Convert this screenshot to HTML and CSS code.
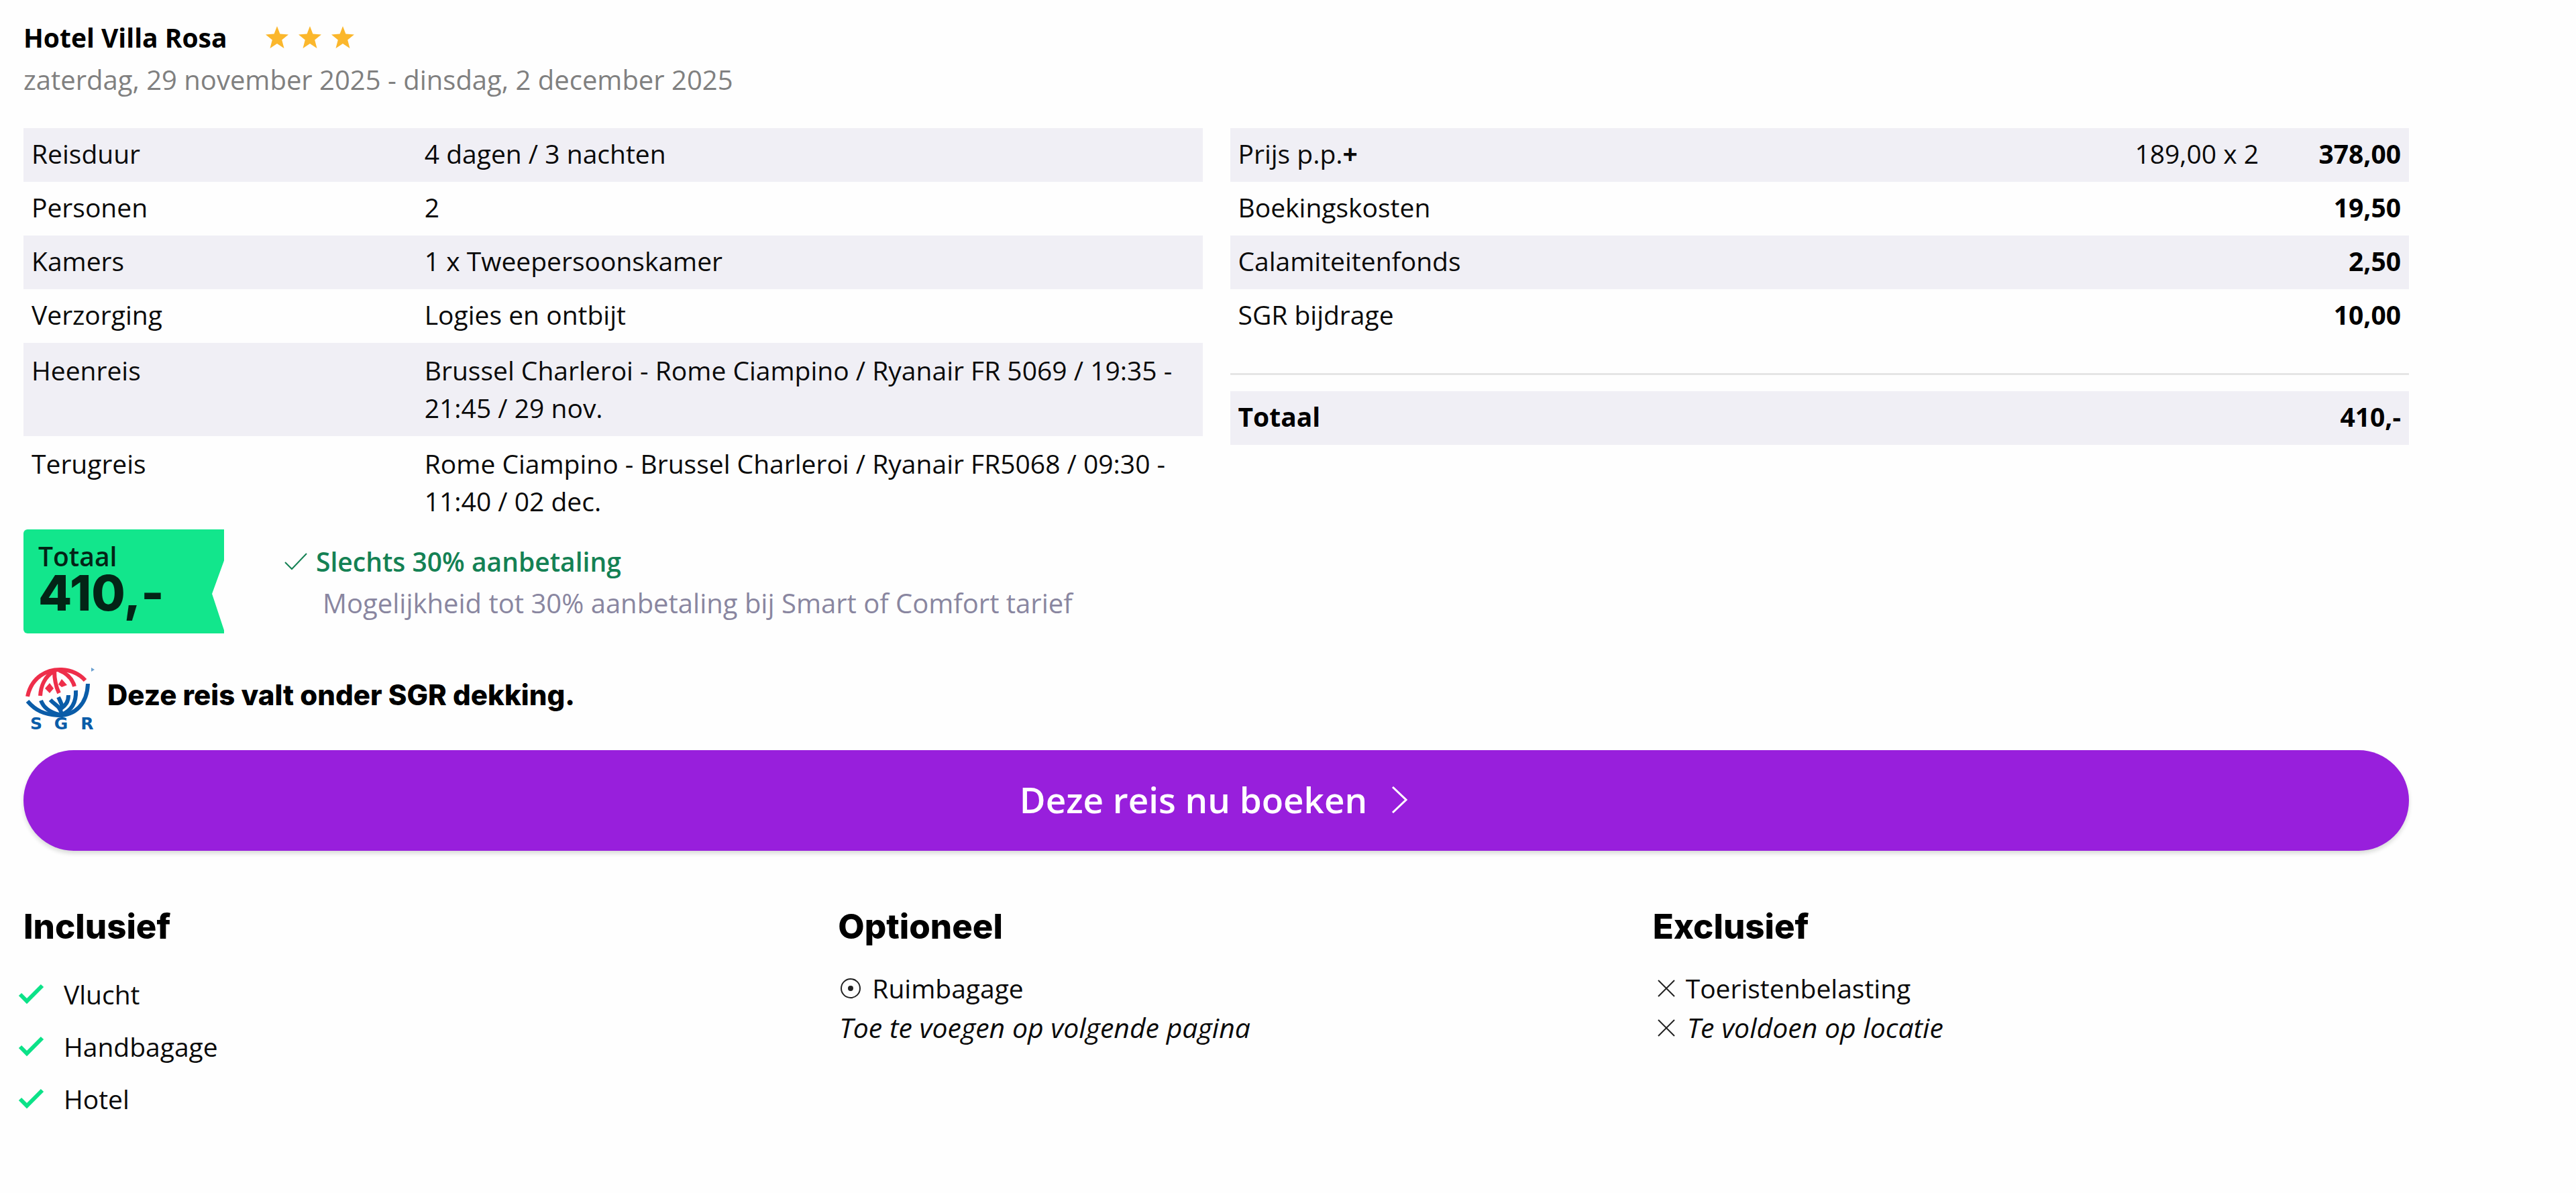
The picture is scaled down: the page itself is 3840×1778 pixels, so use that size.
FILE: index.html
```html
<!DOCTYPE html>
<html lang="nl">
<head>
<meta charset="utf-8">
<title>Hotel Villa Rosa</title>
<link rel="stylesheet" href="styles.css">
</head>
<body>
<svg class="sprite" aria-hidden="true">
  <symbol id="star" viewBox="0 0 34 34"><path d="M17 0 L21.4 11.6 L34 12.4 L24.2 20.4 L27.5 33 L17 26 L6.5 33 L9.8 20.4 L0 12.4 L12.6 11.6 Z" fill="#fbb72c"/></symbol>
  <symbol id="tick" viewBox="0 0 40 34"><path d="M3 17 L13 27 L36 4" fill="none" stroke="#0be288" stroke-width="6"/></symbol>
  <symbol id="cross" viewBox="0 0 26 26"><path d="M1 1 L25 25 M25 1 L1 25" fill="none" stroke="#222" stroke-width="2"/></symbol>
</svg>
<main class="page">
  <header class="head">
    <div class="title-row">
      <h1 class="title">Hotel Villa Rosa</h1>
      <div class="stars" role="img" aria-label="3 sterren">
        <svg class="star"><use href="#star"/></svg>
        <svg class="star"><use href="#star"/></svg>
        <svg class="star"><use href="#star"/></svg>
      </div>
    </div>
    <p class="dates">zaterdag, 29 november 2025 - dinsdag, 2 december 2025</p>
  </header>

  <section class="summary">
    <table class="rows details">
      <tr><th scope="row">Reisduur</th><td>4 dagen / 3 nachten</td></tr>
      <tr><th scope="row">Personen</th><td>2</td></tr>
      <tr><th scope="row">Kamers</th><td>1 x Tweepersoonskamer</td></tr>
      <tr><th scope="row">Verzorging</th><td>Logies en ontbijt</td></tr>
      <tr class="flight"><th scope="row">Heenreis</th><td>Brussel Charleroi - Rome Ciampino / Ryanair FR 5069 / 19:35 - 21:45 / 29 nov.</td></tr>
      <tr class="flight"><th scope="row">Terugreis</th><td>Rome Ciampino - Brussel Charleroi / Ryanair FR5068 / 09:30 - 11:40 / 02 dec.</td></tr>
    </table>
    <div class="costs">
      <table class="rows prices">
        <tr><th scope="row">Prijs p.p.<b>+</b></th><td class="count">189,00 x 2</td><td class="amount">378,00</td></tr>
        <tr><th scope="row">Boekingskosten</th><td class="count"></td><td class="amount">19,50</td></tr>
        <tr><th scope="row">Calamiteitenfonds</th><td class="count"></td><td class="amount">2,50</td></tr>
        <tr><th scope="row">SGR bijdrage</th><td class="count"></td><td class="amount">10,00</td></tr>
      </table>
      <hr class="rule">
      <table class="rows prices total">
        <tr><th scope="row">Totaal</th><td class="amount">410,-</td></tr>
      </table>
    </div>
  </section>

  <section class="offer">
    <div class="badge">
      <div class="badge-label">Totaal</div>
      <div class="badge-price">410,-</div>
    </div>
    <div class="deposit">
      <p class="deposit-title">
        <svg class="deposit-tick" viewBox="0 0 34 26" aria-hidden="true"><path d="M1 14 L11 24 L33 1" fill="none" stroke="#148154" stroke-width="2"/></svg>
        Slechts 30% aanbetaling
      </p>
      <p class="deposit-note">Mogelijkheid tot 30% aanbetaling bij Smart of Comfort tarief</p>
    </div>
  </section>

  <section class="cover">
    <svg class="sgr" viewBox="0 0 108 100" role="img" aria-label="SGR">
      <g fill="none" stroke="#ee2e4a" stroke-width="6">
        <path d="M3 43 C9 14 32 2 54 3 C70 4 81 10 89 19"/>
        <path d="M22 42 C23 26 30 12 43 5"/>
        <path d="M43 4 C43 18 45 28 50 38"/>
        <path d="M50 4 C63 9 70 17 73 28"/>
      </g>
      <g fill="#ee2e4a">
        <path d="M36 23 L42 31 L36 38 L29 31 Z"/>
        <path d="M54 17 L62 26 L54 29 L49 25 Z"/>
      </g>
      <g fill="none" stroke="#0a5ca8" stroke-width="6">
        <path d="M3 50 C15 64 28 70 48 71 C74 72 92 54 93 24"/>
        <path d="M23 49 C27 60 38 67 50 70"/>
        <path d="M37 48 C44 56 52 57 54 70"/>
        <path d="M49 44 C52 50 54 53 55 60"/>
        <path d="M75 34 C76 52 68 64 54 70"/>
        <path d="M64 41 C64 51 60 56 53 61"/>
      </g>
      <path d="M98 0 L103 3 L98 6 Z" fill="#6aa0d0"/>
      <g class="sgr-name">
        <text x="16" y="92">S</text>
        <text x="53" y="92">G</text>
        <text x="92" y="92">R</text>
      </g>
    </svg>
    <p class="cover-text">Deze reis valt onder SGR dekking.</p>
  </section>

  <button class="book" type="button">
    Deze reis nu boeken
    <svg class="chevron" viewBox="0 0 24 40" aria-hidden="true"><path d="M2 1 L22 20 L2 39" fill="none" stroke="#fff" stroke-width="3"/></svg>
  </button>

  <section class="extras">
    <div class="group">
      <h2 class="group-title">Inclusief</h2>
      <ul class="list included">
        <li><svg class="tick" aria-hidden="true"><use href="#tick"/></svg>Vlucht</li>
        <li><svg class="tick" aria-hidden="true"><use href="#tick"/></svg>Handbagage</li>
        <li><svg class="tick" aria-hidden="true"><use href="#tick"/></svg>Hotel</li>
      </ul>
    </div>
    <div class="group">
      <h2 class="group-title">Optioneel</h2>
      <ul class="list">
        <li><svg class="target" viewBox="0 0 32 32" aria-hidden="true"><circle cx="16" cy="16" r="14" fill="none" stroke="#222" stroke-width="2"/><circle cx="16" cy="16" r="4" fill="#222"/></svg>Ruimbagage</li>
        <li><em>Toe te voegen op volgende pagina</em></li>
      </ul>
    </div>
    <div class="group">
      <h2 class="group-title">Exclusief</h2>
      <ul class="list excluded">
        <li><svg class="cross" aria-hidden="true"><use href="#cross"/></svg>Toeristenbelasting</li>
        <li><svg class="cross" aria-hidden="true"><use href="#cross"/></svg><em>Te voldoen op locatie</em></li>
      </ul>
    </div>
  </section>
</main>
</body>
</html>
```
FILE: styles.css
```css
* {
  box-sizing: border-box;
}

body {
  margin: 0;
  background: #fefefe;
  color: #0a0a0a;
  font: 400 39px/56px "Open Sans", "Noto Sans", sans-serif;
}

h1, h2, p, ul {
  margin: 0;
  padding: 0;
}

svg {
  flex: none;
}

.sprite {
  display: none;
}

.page {
  padding: 28px 249px 80px 35px;
}

/* Header */
.head {
  display: flex;
  flex-direction: column;
  gap: 7px;
  margin-bottom: 44px;
}

.title-row {
  display: flex;
  align-items: center;
  gap: 57px;
}

.title {
  font-size: 39px;
  font-weight: 700;
  line-height: 56px;
  color: #000;
}

.stars {
  display: flex;
  gap: 15px;
}

.star {
  width: 34px;
  height: 34px;
}

.dates {
  color: #808080;
  font-size: 40px;
}

/* Trip details and prices */
.summary {
  display: grid;
  grid-template-columns: 1fr 1fr;
  gap: 41px;
  align-items: start;
}

.rows {
  width: 100%;
  border-collapse: collapse;
  table-layout: fixed;
}

.rows th,
.rows td {
  padding: 10px 12px 14px;
  text-align: left;
  vertical-align: top;
  font-weight: 400;
}

.rows tr:nth-child(odd) {
  background: #f0eff5;
}

.details th {
  width: 33.33%;
}

.rows .flight th,
.rows .flight td {
  padding-top: 13px;
}

.rows .count,
.rows .amount {
  width: 212px;
  text-align: right;
}

.rows .count {
  width: 300px;
}

.rows .amount,
.rows.total th {
  font-weight: 700;
  color: #000;
}

.rule {
  height: 3px;
  margin: 45px 0 24px;
  border: 0;
  background: #e5e5e5;
}

/* Total badge and deposit */
.offer {
  display: flex;
  align-items: flex-start;
  gap: 90px;
}

.badge {
  width: 299px;
  padding: 20px 22px 25px;
  border-radius: 6px 0 0 6px;
  background: #12e68c;
  color: #032416;
  clip-path: polygon(0 0, 100% 0, 100% 30%, 94% 62%, 100% 97%, 100% 100%, 0 100%);
}

.badge-label {
  font-weight: 600;
  line-height: 40px;
}

.badge-price {
  font: 800 73px/70px Inter, sans-serif;
}

.deposit {
  display: flex;
  flex-direction: column;
  gap: 6px;
  padding-top: 20px;
}

.deposit-title {
  display: flex;
  align-items: center;
  gap: 13px;
  color: #148154;
  font-weight: 600;
}

.deposit-tick {
  width: 34px;
  height: 26px;
}

.deposit-note {
  padding-left: 57px;
  color: #8986a0;
  font-size: 40px;
}

/* SGR cover */
.cover {
  display: flex;
  align-items: flex-start;
  gap: 14px;
  margin: 51px 0 23px 3px;
}

.sgr {
  width: 108px;
  height: 100px;
  overflow: visible;
}

.sgr-name {
  font: 700 25px "DejaVu Sans", sans-serif;
  fill: #0a5ca8;
  text-anchor: middle;
}

.cover-text {
  padding-top: 13px;
  font: 800 42px/56px Inter, sans-serif;
  color: #000;
}

/* Booking button */
.book {
  display: flex;
  align-items: center;
  justify-content: center;
  gap: 36px;
  width: 100%;
  height: 150px;
  padding: 0 8px 2px 0;
  border: 0;
  border-radius: 75px;
  background: #981fdc;
  box-shadow: 0 4px 6px rgba(0, 20, 0, 0.15);
  color: #fff;
  font: 600 53px/74px "Open Sans", "Noto Sans", sans-serif;
  cursor: pointer;
}

.chevron {
  width: 24px;
  height: 40px;
}

/* Included, optional, excluded */
.extras {
  display: grid;
  grid-template-columns: repeat(3, 1fr);
  gap: 87px;
  margin-top: 81px;
}

.group {
  display: flex;
  flex-direction: column;
  gap: 30px;
}

.group-title {
  font: 800 51px/64px Inter, sans-serif;
  color: #000;
}

.list {
  list-style: none;
  line-height: 59px;
}

.list li {
  display: flex;
  align-items: center;
  gap: 16px;
}

.list em {
  padding-left: 2px;
  font-size: 41px;
}

.included {
  margin-left: -8px;
  line-height: 78px;
}

.included li {
  gap: 28px;
}

.tick {
  width: 40px;
  height: 34px;
}

.target {
  width: 32px;
  height: 32px;
  margin-left: 3px;
}

.cross {
  width: 26px;
  height: 26px;
  margin-left: 7px;
}
```
